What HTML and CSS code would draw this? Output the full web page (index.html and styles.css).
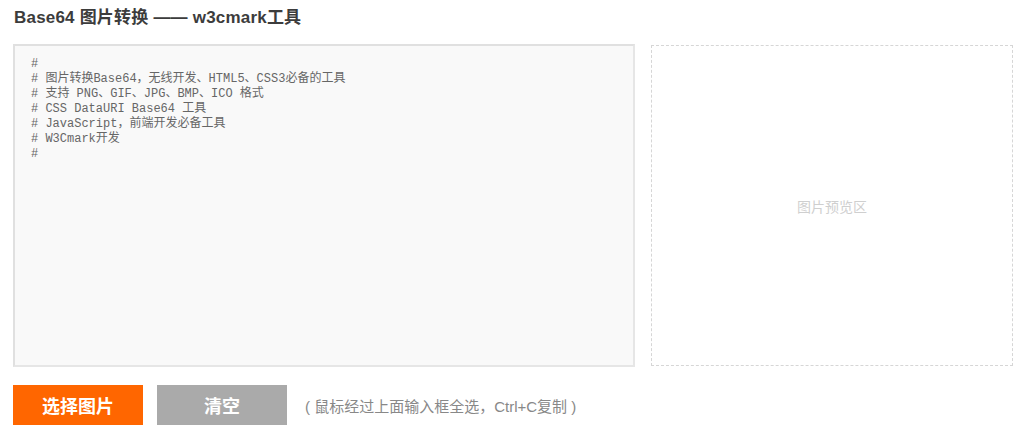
FILE: index.html
```html
<!DOCTYPE html>
<html lang="zh-CN">
<head>
  <meta charset="UTF-8">
  <title>Base64 图片转换</title>
  <link rel="stylesheet" href="styles.css">
</head>
<body>
  <h1 class="titulo">Base64 图片转换 —— w3cmark工具</h1>

  <div class="zona">
    <textarea class="entrada" spellcheck="false">#
# 图片转换Base64，无线开发、HTML5、CSS3必备的工具
# 支持 PNG、GIF、JPG、BMP、ICO 格式
# CSS DataURI Base64 工具
# JavaScript，前端开发必备工具
# W3Cmark开发
#</textarea>
    <div class="vista">图片预览区</div>
  </div>

  <div class="acciones">
    <button class="btn btn-elegir">选择图片</button>
    <button class="btn btn-limpiar">清空</button>
    <span class="ayuda">( 鼠标经过上面输入框全选，Ctrl+C复制 )</span>
  </div>
</body>
</html>
```

FILE: styles.css
```css
body {
  margin: 0;
  padding: 0 21px 0 13px;
  font-family: "Liberation Sans", Arial, "Noto Sans CJK SC", sans-serif;
  background-color: #fff;
  color: #333;
}
.titulo {
  margin: 0;
  padding-top: 8px;
  height: 44px;
  box-sizing: border-box;
  font-size: 17px;
  line-height: 20px;
  letter-spacing: 0.2px;
  color: #3c3c3c;
  padding-left: 1px;
}
.zona {
  display: flex;
  gap: 16px;
  height: 323px;
}
.entrada {
  width: 622px;
  height: 323px;
  box-sizing: border-box;
  margin: 0;
  padding: 11px 16px;
  border: 2px solid #e6e6e6;
  border-top-color: #e0e0e0;
  border-left-color: #e0e0e0;
  background-color: #f9f9f9;
  font-family: "Liberation Mono", "Noto Sans CJK SC", monospace;
  font-size: 12px;
  line-height: 15px;
  color: #666;
  resize: none;
  outline: none;
}
.vista {
  flex: 1;
  margin-top: 1px;
  height: 321px;
  box-sizing: border-box;
  border: 1px dashed #d6d6d6;
  display: flex;
  align-items: center;
  justify-content: center;
  font-size: 14px;
  color: #cfcfcf;
}
.acciones {
  display: flex;
  align-items: center;
  margin-top: 18px;
}
.btn {
  width: 130px;
  height: 40px;
  border: none;
  margin-right: 14px;
  font-family: "Liberation Sans", Arial, "Noto Sans CJK SC", sans-serif;
  font-size: 18px;
  font-weight: bold;
  color: #fff;
  cursor: pointer;
}
.btn-elegir {
  background-color: #ff6600;
}
.btn-limpiar {
  background-color: #aaaaaa;
}
.ayuda {
  margin-left: 4px;
  font-size: 15px;
  color: #888;
}
```
